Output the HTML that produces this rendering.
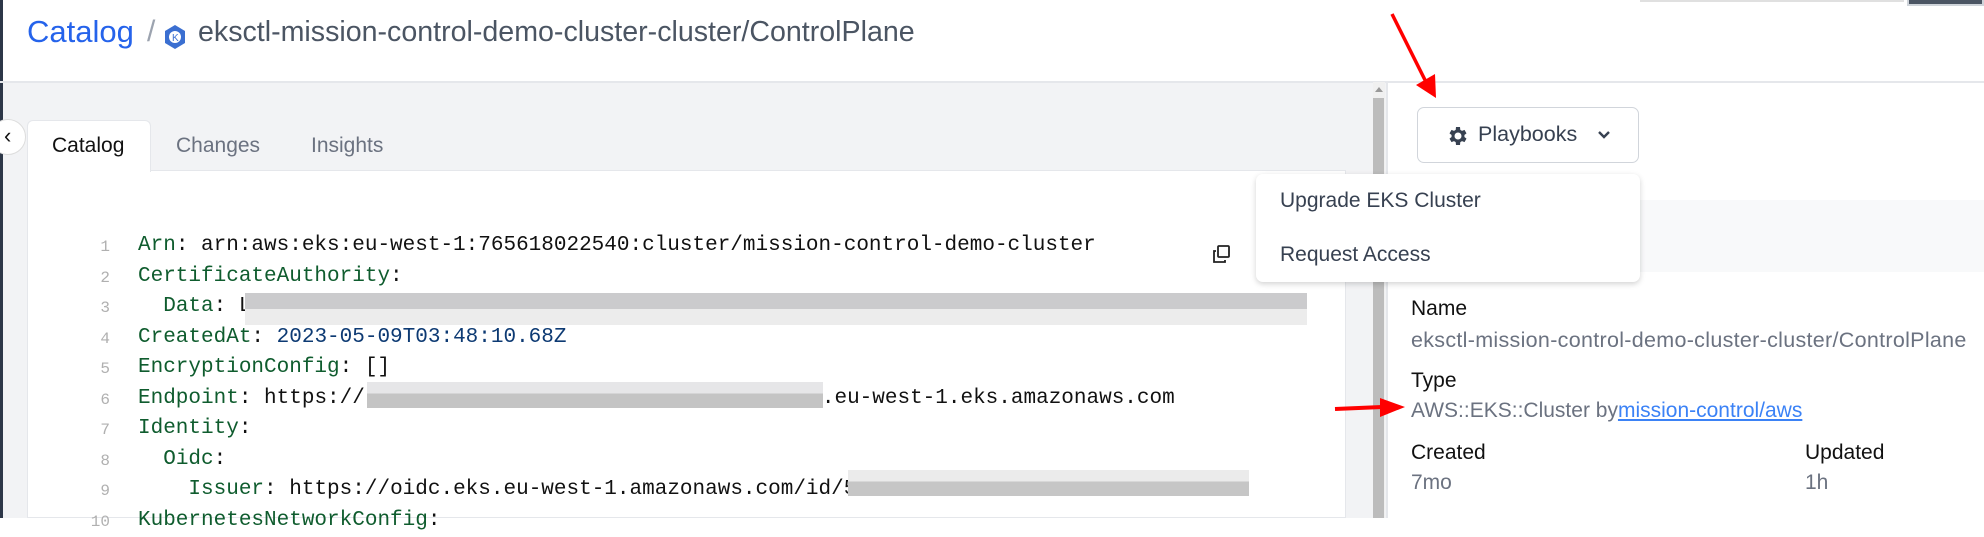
<!DOCTYPE html>
<html><head><meta charset="utf-8"><style>
*{box-sizing:border-box;margin:0;padding:0}
body{width:1984px;height:518px;overflow:hidden;background:#fff;font-family:"Liberation Sans",sans-serif;position:relative}
.abs{position:absolute}
.code{font-family:"Liberation Mono",monospace;font-size:21px;white-space:pre;color:#111}
.lns{font-family:"Liberation Mono",monospace;font-size:16px;color:#b0b0b0;text-align:right;white-space:pre}
.k{color:#0f5c2e}.n{color:#0d3a73}
.blur{position:absolute}
</style></head><body>
<div class="abs" style="left:0;top:0;width:3px;height:518px;background:#2d3748"></div>
<div class="abs" style="left:3px;top:82px;width:1384px;height:436px;background:#f2f3f5"></div>
<div class="abs" style="left:0;top:81px;width:1984px;height:2px;background:#e5e7eb"></div>
<div class="abs" style="left:1907px;top:0;width:77px;height:6px;background:#4b5563;border:2px solid #cfd4da;border-top:0"></div>
<div class="abs" style="left:1640px;top:0;width:264px;height:2px;background:#e0e0e0"></div>
<div class="abs" style="left:27px;top:14px;font-size:31px;color:#2563eb">Catalog</div>
<div class="abs" style="left:147px;top:15px;font-size:30px;color:#9ca3af">/</div>
<svg class="abs" style="left:164px;top:24px" width="22" height="26" viewBox="0 0 22 26"><path d="M11 1 L21 7 L21 19 L11 25 L1 19 L1 7Z" fill="#3b6fd1"/><circle cx="11" cy="13" r="6" fill="#fff"/><text x="8" y="17" font-size="10" fill="#3b6fd1" font-family="Liberation Sans">K</text></svg>
<div class="abs" style="left:198px;top:16px;font-size:28.6px;color:#4b5563">eksctl-mission-control-demo-cluster-cluster/ControlPlane</div>
<div class="abs" style="left:-10px;top:119px;width:36px;height:36px;border-radius:50%;background:#fff;border:1px solid #ddd"></div>
<div class="abs" style="left:4px;top:123px;font-size:22px;color:#111">&#8249;</div>
<div class="abs" style="left:27px;top:170px;width:1319px;height:348px;background:#fff;border:1px solid #e5e7eb"></div>
<div class="abs" style="left:27px;top:120px;width:124px;height:52px;background:#fff;border:1px solid #e5e7eb;border-bottom:0;border-radius:6px 6px 0 0"></div>
<div class="abs" style="left:52px;top:134px;font-size:21px;color:#111">Catalog</div>
<div class="abs" style="left:176px;top:134px;font-size:21px;color:#6b7280">Changes</div>
<div class="abs" style="left:311px;top:134px;font-size:21px;color:#6b7280">Insights</div>
<div class="abs lns" style="left:80px;top:232px;width:30px;line-height:30.5px">1
2
3
4
5
6
7
8
9
10</div>
<div class="abs code" style="left:138px;top:231px;line-height:30.5px"><span class="k">Arn</span>: arn:aws:eks:eu-west-1:765618022540:cluster/mission-control-demo-cluster
<span class="k">CertificateAuthority</span>:
  <span class="k">Data</span>: L
<span class="k">CreatedAt</span>: <span class="n">2023-05-09T03:48:10.68Z</span>
<span class="k">EncryptionConfig</span>: []
<span class="k">Endpoint</span>: https://<span style="display:inline-block;width:457px"></span>.eu-west-1.eks.amazonaws.com
<span class="k">Identity</span>:
  <span class="k">Oidc</span>:
    <span class="k">Issuer</span>: https://oidc.eks.eu-west-1.amazonaws.com/id/5
<span class="k">KubernetesNetworkConfig</span>:</div>
<div class="blur" style="left:245px;top:293px;width:1062px;height:32px;background:linear-gradient(180deg,#cbcbcd 0 50%,#ececec 50%)"></div>
<div class="blur" style="left:367px;top:382px;width:456px;height:26px;background:linear-gradient(180deg,#e6e6e8 0 45%,#c4c4c4 45%)"></div>
<div class="blur" style="left:848px;top:470px;width:401px;height:26px;background:linear-gradient(180deg,#ebebeb 0 45%,#c6c6c6 45%)"></div>
<svg class="abs" style="left:1212px;top:244px" width="20" height="20" viewBox="0 0 20 20" fill="none" stroke="#222" stroke-width="1.8"><rect x="6" y="2" width="11" height="11" rx="1"/><path d="M4 7H2V18H13V16"/></svg>
<div class="abs" style="left:1373px;top:82px;width:12px;height:436px;background:#f0f0f0"></div>
<div class="abs" style="left:1373px;top:98px;width:11px;height:420px;background:#bcbcbc"></div>
<div class="abs" style="left:1375px;top:87px;width:0;height:0;border:4px solid transparent;border-bottom:5px solid #999;border-top:0"></div>
<div class="abs" style="left:1386px;top:82px;width:2px;height:436px;background:#e5e7eb"></div>
<div class="abs" style="left:1388px;top:200px;width:596px;height:72px;background:#f8f9fa"></div>
<div class="abs" style="left:1417px;top:107px;width:222px;height:56px;border:1px solid #d1d5db;border-radius:7px;background:#fff"></div>
<svg class="abs" style="left:1445px;top:124px" width="24" height="24" viewBox="0 0 24 24"><path fill="#374151" d="M19.4 13a7.5 7.5 0 000-2l2.1-1.6-2-3.5-2.5 1a7 7 0 00-1.7-1L15 3h-4l-.3 2.9a7 7 0 00-1.7 1l-2.5-1-2 3.5L6.6 11a7.5 7.5 0 000 2l-2.1 1.6 2 3.5 2.5-1a7 7 0 001.7 1L11 21h4l.3-2.9a7 7 0 001.7-1l2.5 1 2-3.5zM13 15.5a3.5 3.5 0 110-7 3.5 3.5 0 010 7z"/></svg>
<div class="abs" style="left:1478px;top:122px;font-size:21.5px;color:#374151">Playbooks</div>
<svg class="abs" style="left:1597px;top:129px" width="14" height="12" viewBox="0 0 14 12"><path d="M2 3L7 8L12 3" stroke="#374151" stroke-width="2.4" fill="none"/></svg>
<div class="abs" style="left:1256px;top:174px;width:384px;height:108px;background:#fff;border-radius:7px;box-shadow:0 2px 6px rgba(0,0,0,.18)"></div>
<div class="abs" style="left:1280px;top:189px;font-size:21px;color:#374151">Upgrade EKS Cluster</div>
<div class="abs" style="left:1280px;top:243px;font-size:21px;color:#374151">Request Access</div>
<div class="abs" style="left:1411px;top:297px;font-size:21px;color:#111">Name</div>
<div class="abs" style="left:1411px;top:328px;font-size:21.5px;color:#6b7280;letter-spacing:.3px">eksctl-mission-control-demo-cluster-cluster/ControlPlane</div>
<div class="abs" style="left:1411px;top:369px;font-size:21px;color:#111">Type</div>
<div class="abs" style="left:1411px;top:399px;font-size:21px;color:#6b7280">AWS::EKS::Cluster by<span style="color:#3b82f6;text-decoration:underline">mission-control/aws</span></div>
<div class="abs" style="left:1411px;top:441px;font-size:21px;color:#111">Created</div>
<div class="abs" style="left:1411px;top:471px;font-size:21px;color:#6b7280">7mo</div>
<div class="abs" style="left:1805px;top:441px;font-size:21px;color:#111">Updated</div>
<div class="abs" style="left:1805px;top:471px;font-size:21px;color:#6b7280">1h</div>
<svg class="abs" style="left:0;top:0" width="1984" height="518"><path d="M1392 14L1426 82" stroke="#f00" stroke-width="3.5"/><path d="M1416 85L1436 98L1435 74Z" fill="#f00"/><path d="M1335 409L1382 407" stroke="#f00" stroke-width="4"/><path d="M1380 398L1405 407L1380 417Z" fill="#f00"/></svg>
</body></html>
